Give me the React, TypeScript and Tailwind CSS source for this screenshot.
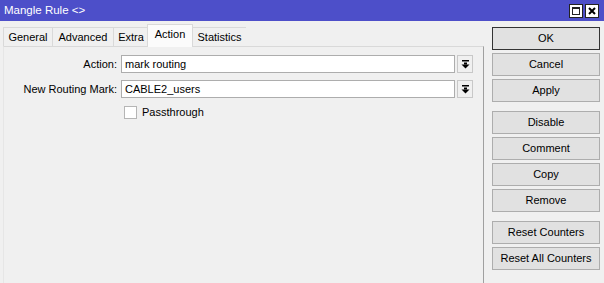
import React from "react";

const font = { fontFamily: '"Liberation Sans", Arial, sans-serif' };

function DropBtn() {
  return (
    <div className="w-[16px] h-[18px] ml-[2px] bg-[#f0f0f0] border border-[#c8c8c8] flex items-center justify-center">
      <svg width="9" height="9" viewBox="0 0 9 9">
        <rect x="1" y="0" width="7" height="1.5" fill="#000" />
        <rect x="3" y="2.5" width="3" height="2" fill="#000" />
        <polygon points="0.5,4.5 8.5,4.5 4.5,8.5" fill="#000" />
      </svg>
    </div>
  );
}

function Btn({ label, def }: { label: string; def?: boolean }) {
  return (
    <div
      className={
        "h-[23px] flex items-center justify-center bg-[#e1e1e1] text-[11px] text-black border " +
        (def ? "border-[#333333]" : "border-[#adadad]")
      }
    >
      {label}
    </div>
  );
}

function Tab({ label, w, active }: { label: string; w: number; active?: boolean }) {
  if (active) {
    return (
      <div
        className="h-[23px] -mx-[1px] relative z-10 bg-[#fbfbfb] border border-b-0 border-[#d9d9d9] flex items-center justify-center text-[11px] pb-[3px]"
        style={{ width: w }}
      >
        {label}
      </div>
    );
  }
  return (
    <div
      className="h-[20px] bg-[#f0f0f0] border border-b-0 border-r-0 border-[#d9d9d9] flex items-center justify-center text-[11px]"
      style={{ width: w }}
    >
      {label}
    </div>
  );
}

export default function App() {
  return (
    <div className="w-[604px] h-[283px] bg-[#f0f0f0] flex flex-col overflow-hidden text-black" style={font}>
      <div className="h-[21px] bg-[#4d4fc9] flex items-center justify-between pl-[4px] pr-[5px]">
        <span className="text-white text-[11.5px]">Mangle Rule &lt;&gt;</span>
        <div className="flex gap-[2px]">
          <div className="w-[14px] h-[14px] bg-white border border-[#222] flex items-center justify-center">
            <div className="w-[8px] h-[8px] border border-[#222] border-t-2" />
          </div>
          <div className="w-[14px] h-[14px] bg-white border border-[#222] flex items-center justify-center">
            <svg width="8" height="8" viewBox="0 0 8 8">
              <path d="M1 1 L7 7 M7 1 L1 7" stroke="#000" strokeWidth="2" />
            </svg>
          </div>
        </div>
      </div>
      <div className="flex flex-1">
        <div className="w-[484px] pl-[3px] flex flex-col pt-[3px]">
          <div className="flex items-end h-[23px]">
            <Tab label="General" w={49} />
            <Tab label="Advanced" w={61} />
            <Tab label="Extra" w={35} />
            <Tab label="Action" w={46} active />
            <Tab label="Statistics" w={54} />
          </div>
          <div className="flex-1 -mt-px border-t border-l border-r border-t-[#d9d9d9] border-l-[#e6e6e6] border-r-[#a0a0a0] bg-[#f0f0f0] pt-[8px]">
            <div className="flex items-center h-[18px]">
              <div className="w-[113px] text-right text-[11px]">Action:</div>
              <div className="ml-[4px] w-[334px] h-[18px] bg-white border border-[#adadad] flex items-center pl-[3px] text-[11px]">
                mark routing
              </div>
              <DropBtn />
            </div>
            <div className="flex items-center h-[18px] mt-[7px]">
              <div className="w-[113px] text-right text-[11px]">New Routing Mark:</div>
              <div className="ml-[4px] w-[334px] h-[18px] bg-white border border-[#adadad] flex items-center pl-[3px] text-[11px]">
                CABLE2_users
              </div>
              <DropBtn />
            </div>
            <div className="flex items-center mt-[6px] pl-[120px]">
              <div className="w-[13px] h-[13px] bg-white border border-[#b5b5b5]" />
              <span className="ml-[5px] text-[11px]">Passthrough</span>
            </div>
          </div>
        </div>
        <div className="w-[108px] ml-[8px] pt-[6px] flex flex-col">
          <div className="flex flex-col gap-[3px]">
            <Btn label="OK" def />
            <Btn label="Cancel" />
            <Btn label="Apply" />
          </div>
          <div className="flex flex-col gap-[3px] mt-[9px]">
            <Btn label="Disable" />
            <Btn label="Comment" />
            <Btn label="Copy" />
            <Btn label="Remove" />
          </div>
          <div className="flex flex-col gap-[3px] mt-[9px]">
            <Btn label="Reset Counters" />
            <Btn label="Reset All Counters" />
          </div>
        </div>
      </div>
    </div>
  );
}
